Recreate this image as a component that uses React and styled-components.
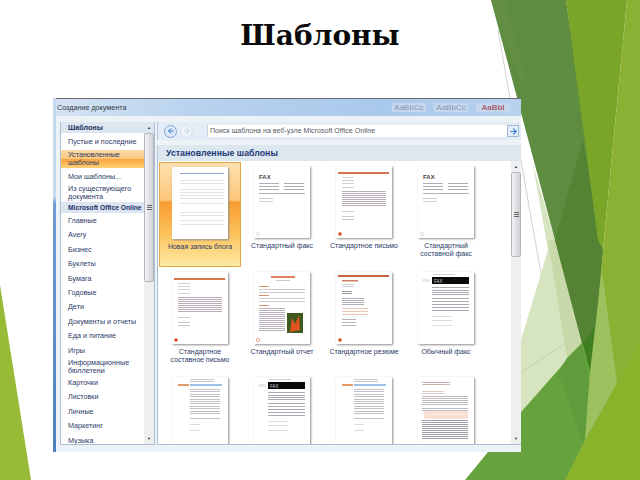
import React from 'react'
import styled, { createGlobalStyle } from 'styled-components'
import { ArrowLeft, ArrowRight } from 'lucide-react'

const GlobalStyle = createGlobalStyle`
  html, body {
    margin: 0;
    background: #fff;
  }
`

const categories = [
  { name: 'Пустые и последние' },
  { name: 'Установленные шаблоны', tall: true, active: true },
  { name: 'Мои шаблоны...' },
  { name: 'Из существующего документа', tall: true },
  { name: 'Microsoft Office Online', band: true },
  { name: 'Главные' },
  { name: 'Avery' },
  { name: 'Бизнес' },
  { name: 'Буклеты' },
  { name: 'Бумага' },
  { name: 'Годовые' },
  { name: 'Дети' },
  { name: 'Документы и отчеты' },
  { name: 'Еда и питание' },
  { name: 'Игры' },
  { name: 'Информационные бюллетени', tall: true },
  { name: 'Карточки' },
  { name: 'Листовки' },
  { name: 'Личные' },
  { name: 'Маркетинг' },
  { name: 'Музыка' },
]

const templates = [
  { kind: 'blog', label: 'Новая запись блога', active: true },
  { kind: 'fax', label: 'Стандартный факс' },
  { kind: 'letter', label: 'Стандартное письмо' },
  { kind: 'fax', label: 'Стандартный составной факс' },
  { kind: 'letter', label: 'Стандартное составное письмо' },
  { kind: 'report', label: 'Стандартный отчет' },
  { kind: 'resume', label: 'Стандартное резюме' },
  { kind: 'blackFax', label: 'Обычный факс' },
  { kind: 'blueLetter' },
  { kind: 'blackFax' },
  { kind: 'blueLetter' },
  { kind: 'essay' },
]

const Lines = ({ x = 6, ys, w = 44, color = '#c4c4cc', h = 1 }) =>
  ys.map((y) => <rect key={y} x={x} y={y} width={w} height={h} fill={color} />)

const thumbs = {
  blog: (
    <>
      <rect x="8" y="6" width="44" height="1" fill="#8aa6cc" />
      <Lines x={8} ys={[13, 16, 22, 25, 28, 31, 36, 45, 48, 53, 57]} color="#e2e2e8" />
    </>
  ),
  fax: (
    <>
      <text x="5" y="13" fontSize="6" fontWeight="700" fontFamily="Liberation Sans, sans-serif" fill="#444">
        FAX
      </text>
      <Lines x={5} ys={[17, 20, 23]} w={20} color="#aeaeb6" />
      <Lines x={30} ys={[17, 20, 23]} w={20} color="#aeaeb6" />
      <Lines x={5} ys={[27]} w={46} color="#b0b0b8" />
      <Lines x={5} ys={[32, 35]} w={14} color="#cfcfd4" />
      <circle cx="4" cy="68" r="1.6" fill="none" stroke="#dedede" />
    </>
  ),
  letter: (
    <>
      <rect x="2" y="6" width="51" height="2" fill="#d8744c" />
      <Lines x={6} ys={[11, 14, 17, 21]} w={12} color="#d0d0d6" />
      <Lines x={6} ys={[25, 27, 29, 31, 33, 35, 37, 39]} w={44} color="#b8aeb8" />
      <Lines x={6} ys={[45, 50, 53]} w={12} color="#cacad0" />
      <circle cx="4" cy="68" r="1.8" fill="#dc4a24" />
    </>
  ),
  report: (
    <>
      <rect x="17" y="4" width="24" height="2" fill="#e0835e" />
      <rect x="22" y="8" width="14" height="1" fill="#c8c8c8" />
      <rect x="5" y="14" width="10" height="1" fill="#d99070" />
      <Lines x={5} ys={[17, 20]} w={46} color="#d0c8d0" />
      <rect x="5" y="23" width="10" height="1" fill="#d99070" />
      <Lines x={5} ys={[26, 29]} w={46} color="#d0c8d0" />
      <rect x="5" y="33" width="10" height="1" fill="#d99070" />
      <Lines x={5} ys={[36, 38, 40, 42, 44, 46, 48, 50, 52, 54, 56, 58]} w={26} color="#b8b0ba" />
      <rect x="33" y="41" width="16" height="20" fill="#3e5a1e" />
      <path d="M36 60 L38 46 L41 52 L45 43 L46 58 Z" fill="#e0521c" />
      <circle cx="4" cy="68" r="1.6" fill="none" stroke="#e8a48c" />
    </>
  ),
  resume: (
    <>
      <rect x="2" y="3" width="51" height="2" fill="#c8623c" />
      <rect x="6" y="8" width="16" height="1.5" fill="#c98468" />
      <Lines x={6} ys={[12, 14]} w={12} color="#d0d0d6" />
      <Lines x={6} ys={[19, 21]} w={10} color="#999" />
      <Lines x={6} ys={[26, 28, 30, 32]} w={22} color="#b0b0b8" />
      <Lines x={6} ys={[36, 39, 42]} w={26} color="#f0c4b2" />
      <Lines x={6} ys={[47, 50, 53]} w={14} color="#b8b0b8" />
      <circle cx="4" cy="68" r="1.8" fill="#dc4a24" />
    </>
  ),
  blackFax: (
    <>
      <Lines x={15} ys={[2]} w={22} color="#cfcfd4" />
      <rect x="14" y="5" width="37" height="7" fill="#0a0a0a" />
      <text x="16" y="10.5" fontSize="4.5" fill="#ccc" fontFamily="Liberation Sans, sans-serif">
        FAX
      </text>
      <rect x="4" y="7" width="8" height="3" fill="#e8e8e8" />
      <Lines x={14} ys={[15, 18, 20, 22, 26, 29, 32, 35, 38]} w={37} color="#aaaab2" />
      <Lines x={14} ys={[44, 48, 53]} w={20} color="#e0dada" />
    </>
  ),
  blueLetter: (
    <>
      <Lines x={18} ys={[2, 4]} w={24} color="#cacad0" />
      <rect x="6" y="7" width="11" height="2" fill="#e49a68" />
      <rect x="18" y="7" width="32" height="2" fill="#9cc0e4" />
      <Lines x={18} ys={[12, 14, 17, 19, 22, 24, 26, 29, 31, 34, 36, 41]} w={30} color="#c0c0c6" />
      <Lines x={18} ys={[47, 53]} w={10} color="#dadade" />
    </>
  ),
  essay: (
    <>
      <Lines x={4} ys={[5, 7]} w={28} color="#c8b4ac" />
      <Lines x={4} ys={[14, 16]} w={22} color="#dccec6" />
      <Lines x={4} ys={[19, 21, 23, 25, 27, 31, 33]} w={46} color="#bebac0" />
      <rect x="7" y="35" width="42" height="6" fill="#fbe6dc" stroke="#e8b49c" strokeWidth="0.6" />
      <Lines x={4} ys={[43, 45, 47, 49, 51, 53, 55, 57, 59, 61]} w={46} color="#9c9ca4" />
    </>
  ),
}

function Scrollbar({ thumbHeight, tinted }) {
  return (
    <Track>
      <Arrow $tinted={tinted}>▲</Arrow>
      <Thumb $height={thumbHeight}>
        <Grip />
      </Thumb>
      <Spacer />
      <Arrow>▼</Arrow>
    </Track>
  )
}

function Backdrop() {
  return (
    <Shapes viewBox="0 0 640 480">
      <polygon points="0,285 31,480 0,480" fill="#97bb36" />
      <polyline points="498,30 535,240 573,447" fill="none" stroke="#c4c8bd" strokeWidth="0.8" />
      <polygon points="533,165 555,240 582,343 521,412 521,340 548,250" fill="#d6e4c0" />
      <polyline points="521,372 582,333" fill="none" stroke="#bdcca6" strokeWidth="0.8" />
      <polygon points="548,240 555,240 582,343 567,358" fill="#c8d8a8" />
      <polygon points="465,480 488,452 521,452 521,412 582,343 592,372 590,480" fill="#66a23e" />
      <polygon points="558,372 567,358 582,343 592,400 584,445" fill="#619c3c" />
      <polygon points="491,0 566,0 603,250 592,372 582,343 555,240" fill="#5e8c40" />
      <polygon points="491,0 505,0 530,95 518,75" fill="#628f45" />
      <polygon points="583,140 603,250 592,372 582,343 555,240" fill="#548433" />
      <polygon points="594,328 583,343 590,372 593,352" fill="#3f7f1f" />
      <polygon points="566,0 627,0 603,250 598,240" fill="#79a528" />
      <polygon points="627,0 640,0 640,480 565,480 585,440 592,372 603,250" fill="#8ab034" />
      <polygon points="602,270 617,383 585,440 590,372" fill="#9cc25f" />
      <polygon points="640,343 565,480 640,480" fill="#88b42a" />
    </Shapes>
  )
}

export default function App() {
  return (
    <>
      <GlobalStyle />
      <Slide>
        <Backdrop />
        <Title>Шаблоны</Title>
        <Dialog>
          <TitleBar>
            <Caption>Создание документа</Caption>
            <Styles>
              <StyleSwatch>AaBbCc</StyleSwatch>
              <StyleSwatch>AaBbCc</StyleSwatch>
              <StyleSwatch $red>AaBbI</StyleSwatch>
            </Styles>
          </TitleBar>
          <Body>
            <Sidebar>
              <List>
                <ListHeader>Шаблоны</ListHeader>
                {categories.map((c) =>
                  c.band ? (
                    <Band key={c.name}>{c.name}</Band>
                  ) : (
                    <Item key={c.name} $tall={c.tall} $active={c.active}>
                      {c.name}
                    </Item>
                  ),
                )}
              </List>
              <Scrollbar thumbHeight={149} tinted />
            </Sidebar>
            <Main>
              <Toolbar>
                <BackButton>
                  <ArrowLeft size={8} strokeWidth={3} />
                </BackButton>
                <ForwardButton>
                  <ArrowRight size={8} strokeWidth={3} />
                </ForwardButton>
                <Search>
                  <SearchText>Поиск шаблона на веб-узле Microsoft Office Online</SearchText>
                  <GoButton>
                    <ArrowRight size={9} strokeWidth={3} />
                  </GoButton>
                </Search>
              </Toolbar>
              <SectionHead>Установленные шаблоны</SectionHead>
              <Content>
                <Grid>
                  {templates.map((t, i) => (
                    <Tile key={i} $active={t.active}>
                      <Page viewBox="0 0 56 72">{thumbs[t.kind]}</Page>
                      {t.label && <Label>{t.label}</Label>}
                    </Tile>
                  ))}
                </Grid>
                <Scrollbar thumbHeight={85} />
              </Content>
            </Main>
          </Body>
        </Dialog>
      </Slide>
    </>
  )
}

const Slide = styled.div`
  position: relative;
  width: 640px;
  height: 480px;
  overflow: hidden;
  background: #fff;
`

const Shapes = styled.svg`
  position: absolute;
  inset: 0;
  width: 640px;
  height: 480px;
`

const Title = styled.h1`
  position: relative;
  margin: 0;
  height: 98px;
  padding-top: 18px;
  box-sizing: border-box;
  text-align: center;
  font: 700 28px/36px 'DejaVu Serif', serif;
  color: #0a0a0a;
`

const Dialog = styled.div`
  position: relative;
  display: flex;
  flex-direction: column;
  width: 465px;
  height: 354px;
  margin-left: 53px;
  border-left: 3px solid transparent;
  border-image: linear-gradient(#c4d8ee 0%, #c4d8ee 28%, #6f9ed6 30%, #4d80c0 100%) 1;
  background: #edf2f7;
  filter: blur(0.5px);
  font-family: 'Liberation Sans', sans-serif;
`

const TitleBar = styled.div`
  display: flex;
  align-items: center;
  justify-content: space-between;
  height: 18px;
  box-sizing: border-box;
  border-top: 1px solid #6a6a70;
  background: linear-gradient(90deg, #d4e3f3 0%, #b9d2ee 30%, #a9c9ec 70%, #b8d2ee 100%);
`

const Caption = styled.div`
  padding-left: 1px;
  font-size: 7.2px;
  color: #333a44;
`

const Styles = styled.div`
  display: flex;
  gap: 8px;
  padding-right: 11px;
  filter: blur(0.7px);
`

const StyleSwatch = styled.div`
  width: 34px;
  text-align: center;
  font-size: 8px;
  font-weight: ${(p) => (p.$red ? 700 : 400)};
  color: ${(p) => (p.$red ? '#a8606c' : '#8496ac')};
  background: #c4d7ec;
`

const Body = styled.div`
  flex: 1;
  display: flex;
  gap: 2px;
  min-height: 0;
  padding: 6px 0 7px 4px;
`

const Sidebar = styled.div`
  display: flex;
  width: 95px;
  box-sizing: border-box;
  border: 1px solid #a9bfd6;
  border-top: 0;
  background: #fff;
  overflow: hidden;
`

const List = styled.div`
  display: flex;
  flex-direction: column;
  flex: 1;
  min-width: 0;
  font-size: 7.2px;
  line-height: 8px;
  color: #2b3a68;
`

const ListHeader = styled.div`
  flex: none;
  height: 11px;
  margin-bottom: 2px;
  padding-left: 7px;
  font-weight: 700;
  line-height: 12px;
  background: #dce6f0;
  color: #1f2f5e;
`

const Item = styled.div`
  flex: none;
  display: flex;
  align-items: center;
  height: ${(p) => (p.$tall ? 18 : 14.42)}px;
  margin: ${(p) => (p.$active ? '1px 0' : 0)};
  padding-left: 7px;
  padding-right: ${(p) => (p.$tall ? 12 : 0)}px;
  box-sizing: border-box;
  white-space: ${(p) => (p.$tall ? 'normal' : 'nowrap')};
  background: ${(p) =>
    p.$active ? 'linear-gradient(#fbd9a4 0%, #fcc880 48%, #fba53c 52%, #fdd276 100%)' : 'transparent'};
`

const Band = styled.div`
  flex: none;
  height: 11px;
  padding-left: 7px;
  margin-bottom: 1px;
  font-weight: 700;
  font-size: 6.7px;
  line-height: 11px;
  white-space: nowrap;
  background: #dce6f0;
  color: #1f2f6e;
`

const Track = styled.div`
  flex: none;
  display: flex;
  flex-direction: column;
  width: 10px;
  background: #eeeff1;
`

const Arrow = styled.div`
  flex: none;
  height: 11px;
  text-align: center;
  font-size: 4px;
  line-height: 11px;
  color: #333;
  background: ${(p) => (p.$tinted ? '#dce6f0' : 'transparent')};
`

const Thumb = styled.div`
  flex: none;
  display: flex;
  align-items: center;
  justify-content: center;
  height: ${(p) => p.$height}px;
  border: 1px solid #b4b6ba;
  border-radius: 2px;
  box-sizing: border-box;
  background: linear-gradient(90deg, #f4f4f6, #cfd0d4);
`

const Grip = styled.div`
  width: 5px;
  height: 5px;
  background: repeating-linear-gradient(#666 0 1px, transparent 1px 2px);
`

const Spacer = styled.div`
  flex: 1;
`

const Main = styled.div`
  flex: 1;
  min-width: 0;
  display: flex;
  flex-direction: column;
`

const Toolbar = styled.div`
  flex: none;
  display: flex;
  align-items: center;
  height: 18px;
  margin-bottom: 5px;
  padding-left: 6px;
  box-sizing: border-box;
  background: #e4ecf5;
  border-left: 1px solid #b4c8dc;
`

const RoundButton = styled.div`
  display: flex;
  align-items: center;
  justify-content: center;
  width: 11px;
  height: 11px;
  border-radius: 50%;
`

const BackButton = styled(RoundButton)`
  border: 1px solid #7da5d6;
  color: #3a76c4;
  background: #dceafa;
`

const ForwardButton = styled(RoundButton)`
  margin-left: 3px;
  border: 1px solid #d6e2f0;
  color: #c4d4e6;
  background: #edf3f9;
`

const Search = styled.div`
  display: flex;
  align-items: center;
  justify-content: space-between;
  width: 311px;
  height: 12px;
  margin-left: 14px;
  background: #fff;
  border-left: 1px solid #c4d2e0;
`

const SearchText = styled.div`
  padding-left: 2px;
  font-size: 7.1px;
  color: #555c66;
  white-space: nowrap;
`

const GoButton = styled.div`
  display: flex;
  align-items: center;
  justify-content: center;
  width: 12px;
  height: 12px;
  box-sizing: border-box;
  border: 1px solid #9db8d6;
  color: #3f7fd0;
  background: #e4eefa;
`

const SectionHead = styled.div`
  flex: none;
  height: 16px;
  padding-left: 8px;
  font-size: 8.8px;
  font-weight: 700;
  line-height: 17px;
  color: #1f3a78;
  background: #dce7f0;
  border-left: 1px solid #b4c8dc;
`

const Content = styled.div`
  flex: 1;
  min-height: 0;
  display: flex;
  background: #fff;
  border: 1px solid #a9bfd6;
  border-width: 0 0 1px 1px;
  overflow: hidden;
`

const Grid = styled.div`
  flex: 1;
  min-width: 0;
  display: grid;
  grid-template-columns: repeat(4, 82px);
  grid-auto-rows: 105.5px;
  padding-left: 1px;
  padding-top: 1px;
`

const Tile = styled.div`
  display: flex;
  flex-direction: column;
  align-items: center;
  box-sizing: border-box;
  padding: 4px 2px 0;
  ${(p) =>
    p.$active &&
    `
    height: 105px;
    border: 1px solid #e2a94c;
    background: linear-gradient(#fde0ae 0%, #fcc67a 36%, #f99c30 38%, #fcc25c 68%, #fee9a2 100%);
  `}
`

const Page = styled.svg`
  flex: none;
  width: 56px;
  height: 72px;
  background: #fff;
  box-shadow: 1px 1px 2px #8d8d8d;
`

const Label = styled.div`
  margin-top: 4px;
  width: 76px;
  text-align: center;
  font-size: 7px;
  line-height: 8px;
  color: #2b3a68;
`
